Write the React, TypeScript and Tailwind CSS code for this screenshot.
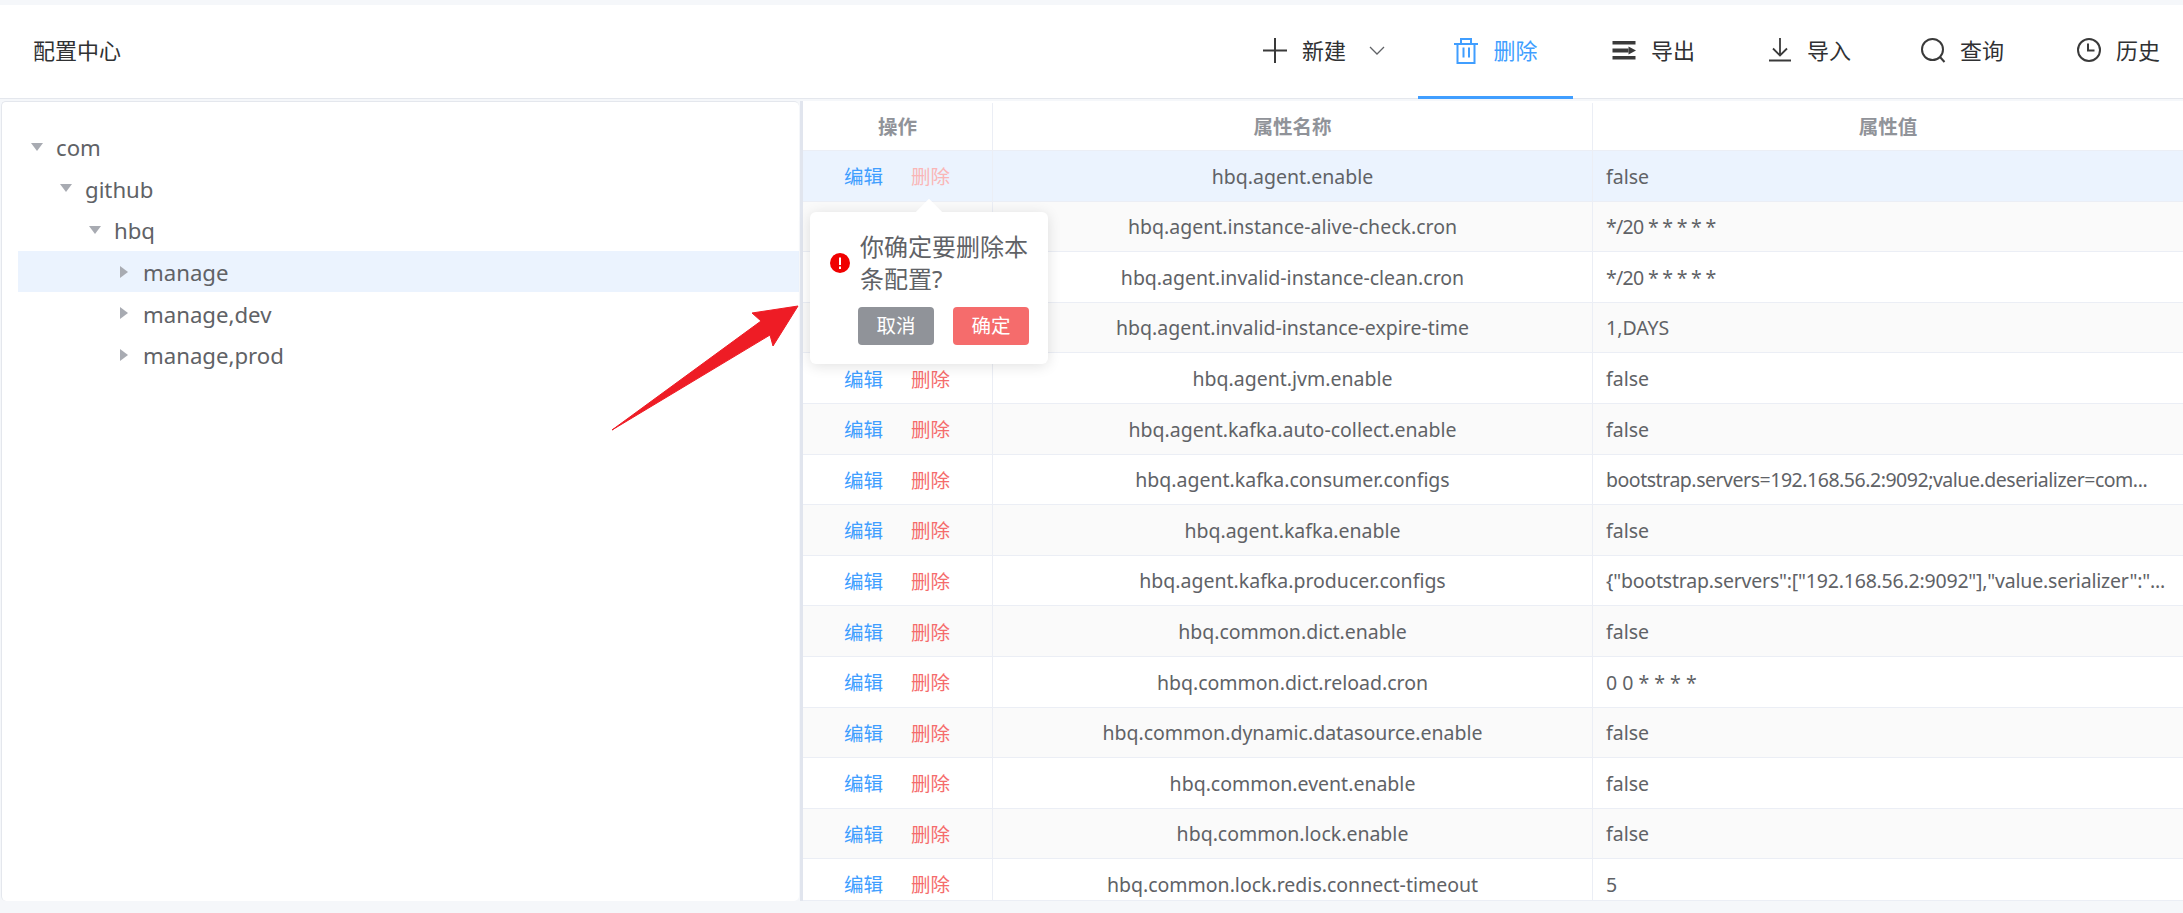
import React from "react";

const rows: [string, string, string?][] = [
  ["hbq.agent.enable", "false"],
  ["hbq.agent.instance-alive-check.cron", "*/20 * * * * *", "tracking-[-0.7px]"],
  ["hbq.agent.invalid-instance-clean.cron", "*/20 * * * * *", "tracking-[-0.7px]"],
  ["hbq.agent.invalid-instance-expire-time", "1,DAYS"],
  ["hbq.agent.jvm.enable", "false"],
  ["hbq.agent.kafka.auto-collect.enable", "false"],
  ["hbq.agent.kafka.consumer.configs", "bootstrap.servers=192.168.56.2:9092;value.deserializer=com...", "tracking-[-0.47px]"],
  ["hbq.agent.kafka.enable", "false"],
  ["hbq.agent.kafka.producer.configs", '{"bootstrap.servers":["192.168.56.2:9092"],"value.serializer":"...', "tracking-[-0.2px]"],
  ["hbq.common.dict.enable", "false"],
  ["hbq.common.dict.reload.cron", "0 0 * * * *"],
  ["hbq.common.dynamic.datasource.enable", "false"],
  ["hbq.common.event.enable", "false"],
  ["hbq.common.lock.enable", "false"],
  ["hbq.common.lock.redis.connect-timeout", "5"],
];

const tree: { label: string; pl: string; open: boolean; sel?: boolean }[] = [
  { label: "com", pl: "pl-[13px]", open: true },
  { label: "github", pl: "pl-[42px]", open: true },
  { label: "hbq", pl: "pl-[71px]", open: true },
  { label: "manage", pl: "pl-[100px]", open: false, sel: true },
  { label: "manage,dev", pl: "pl-[100px]", open: false },
  { label: "manage,prod", pl: "pl-[100px]", open: false },
];

function Tool({ icon, label, active, extra }: { icon: React.ReactNode; label: string; active?: boolean; extra?: React.ReactNode }) {
  return (
    <div className={`flex items-center h-full ${active ? "text-[#409eff] pb-[1px]" : "text-[#303133] pb-[3px]"}`}>
      <span className="w-[26px] h-[26px] flex items-center justify-center mr-[14px]">{icon}</span>
      <span className="text-[22px] leading-none">{label}</span>
      {extra}
    </div>
  );
}

export default function App() {
  return (
    <div className="relative h-[913px] w-[2183px] overflow-hidden bg-[#f5f7fa] pt-[5px] font-['Noto_Sans','Noto_Sans_CJK_SC',sans-serif] text-[#606266]">
      <header className="h-[94px] bg-white border-b border-[#e4e7ed] flex items-stretch pl-[33px]">
        <div className="flex items-center pb-[3px] text-[22px] text-[#303133] flex-1">配置中心</div>
        <div className="flex items-stretch pr-[23px]">
          <div className="flex items-center mr-[33px]">
            <Tool
              label="新建"
              icon={
                <svg width="24" height="25" viewBox="0 0 24 25" fill="none" stroke="#3a3a3a" strokeWidth="2"><path d="M12 0v25M0 12.500h24" /></svg>
              }
              extra={
                <svg className="ml-[23px]" width="16" height="9" viewBox="0 0 16 9" fill="none" stroke="#606266" strokeWidth="1.300"><path d="M1 1l7 7 7-7" /></svg>
              }
            />
          </div>
          <div className="w-[155px] flex justify-center border-b-[3px] border-[#409eff] mr-[38px] -mb-px">
            <Tool
              active
              label="删除"
              icon={
                <svg width="26" height="27" viewBox="0 0 26 27" fill="none" stroke="currentColor" strokeWidth="2"><path d="M1 7h24M8 6.500V2h10v4.500M4.500 7v19h17V7M10.500 10.500v10M16 10.500v10" /></svg>
              }
            />
          </div>
          <div className="flex items-center mr-[72px]">
            <Tool
              label="导出"
              icon={
                <svg width="24" height="19" viewBox="0 0 24 19" fill="#3a3a3a"><rect x="0.500" y="0" width="23" height="3.500" /><rect x="0.500" y="7.500" width="16" height="4" /><path d="M16.500 5.500 24 9.500l-7.500 4z" /><rect x="0.500" y="15" width="23" height="3.500" /></svg>
              }
            />
          </div>
          <div className="flex items-center mr-[69px]">
            <Tool
              label="导入"
              icon={
                <svg width="24" height="24" viewBox="0 0 24 24" fill="none" stroke="#3a3a3a" strokeWidth="1.800"><path d="M12 0v17M5 10.500 12 17.500l7-7M1 22.500h22" /></svg>
              }
            />
          </div>
          <div className="flex items-center mr-[72px]">
            <Tool
              label="查询"
              icon={
                <svg width="26" height="26" viewBox="0 0 26 26" fill="none" stroke="#3a3a3a" strokeWidth="2"><circle cx="12.500" cy="12.500" r="10.500" /><path d="m20 20 4.500 5" /></svg>
              }
            />
          </div>
          <Tool
            label="历史"
            icon={
              <svg width="26" height="26" viewBox="0 0 26 26" fill="none" stroke="#3a3a3a" strokeWidth="2"><circle cx="13" cy="13" r="11" /><path d="M12 6.500V13.500h6.500" /></svg>
            }
          />
        </div>
      </header>

      <main className="flex h-[800px] mt-[2px]">
        <aside className="ml-px w-[798px] bg-white rounded-[5px] border-t border-l border-[#e4e7ed] pt-[24px] pl-[16px]">
          {tree.map((n) => (
            <div key={n.label} className={`h-[41.600px] flex items-center text-[22.200px] leading-none ${n.pl} ${n.sel ? "bg-[#ebf3fe]" : ""}`}>
              <span className="w-[12px] flex justify-center mr-[13px]">
                {n.open ? (
                  <svg width="12" height="8" viewBox="0 0 12 8" fill="#a8abb2"><path d="M0 0h12L6 8z" /></svg>
                ) : (
                  <svg width="8" height="12" viewBox="0 0 8 12" fill="#a8abb2"><path d="M0 0v12l8-6z" /></svg>
                )}
              </span>
              <span className="text-[#606266] pt-[3px]">{n.label}</span>
            </div>
          ))}
        </aside>
        <div className="w-[3px] ml-px bg-[#e1e5ee]" />
        <section className="flex-1 bg-white overflow-hidden border-b border-[#ebeef5]">
          <div className="flex h-[48px] mt-[2px] border-b border-[#ebeef5] text-[19.500px] font-bold text-[#909399] bg-white">
            <div className="w-[190px] shrink-0 flex items-center justify-center border-r border-[#ebeef5]">操作</div>
            <div className="w-[600px] shrink-0 flex items-center justify-center border-r border-[#ebeef5]">属性名称</div>
            <div className="flex-1 flex items-center justify-center">属性值</div>
          </div>
          {rows.map(([k, v, t], i) => (
            <div
              key={k}
              className={`flex h-[50.600px] border-b border-[#ebeef5] text-[19.500px] ${i === 0 ? "bg-[#ebf3fe]" : i % 2 === 1 ? "bg-[#fafafa]" : "bg-white"}`}
            >
              <div className="w-[190px] shrink-0 flex items-center justify-center gap-[28px] pt-[2px] pr-[1px] border-r border-[#ebeef5]">
                <span className="text-[#409eff]">编辑</span>
                <span className={i === 0 ? "text-[#fab6b6]" : "text-[#f56c6c]"}>删除</span>
              </div>
              <div className="w-[600px] shrink-0 flex items-center justify-center pt-[1px] border-r border-[#ebeef5]">{k}</div>
              <div className={`flex-1 flex items-center pl-[13px] pt-[1px] whitespace-nowrap overflow-hidden ${t ?? ""}`}>{v}</div>
            </div>
          ))}
        </section>
      </main>

      {/* Popconfirm */}
      <div className="absolute left-[810px] top-[212px] w-[238px] h-[152px] bg-white rounded-[6px] shadow-[0_2px_14px_rgba(0,0,0,0.12)]">
        <div className="absolute left-[109px] -top-[9px] w-[20px] h-[20px] rotate-45 bg-white" />
        <div className="relative flex items-center pl-[20px] pt-[19px]">
          <svg className="shrink-0 mr-[10px]" width="20" height="20" viewBox="0 0 20 20"><circle cx="10" cy="10" r="10" fill="#f00000" /><rect x="9" y="4.500" width="2" height="7.500" fill="#fff" /><rect x="9" y="13.500" width="2" height="2.500" fill="#fff" /></svg>
          <p className="w-[172px] text-[24px] leading-[32px] text-[#606266]">你确定要删除本条配置?</p>
        </div>
        <div className="relative flex gap-[19px] pl-[48px] mt-[12px]">
          <button className="w-[76px] h-[38px] rounded-[4px] bg-[#909399] text-white text-[19.500px]">取消</button>
          <button className="w-[76px] h-[38px] rounded-[4px] bg-[#f56c6c] text-white text-[19.500px]">确定</button>
        </div>
      </div>

      {/* Annotation arrow */}
      <svg className="absolute left-0 top-0 pointer-events-none" width="2183" height="913" viewBox="0 0 2183 913">
        <path d="M798 306 752 313 761 321 612 430 770 335 773 346Z" fill="#ee1c25" stroke="#ee1c25" strokeWidth="1" strokeLinejoin="round" />
      </svg>
    </div>
  );
}
